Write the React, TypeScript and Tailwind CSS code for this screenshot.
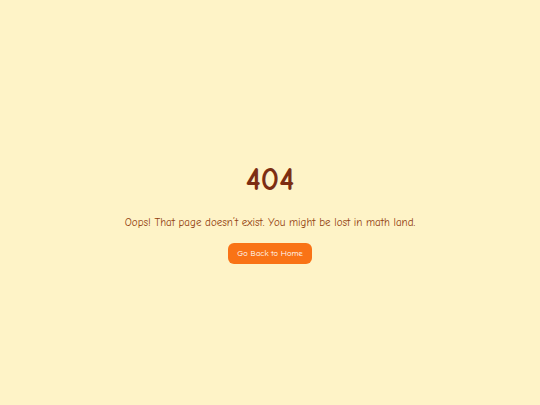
export default function App() {
  return (
    <div
      className="min-h-screen bg-[#fef3c7] flex flex-col items-center justify-center text-center px-4 pt-[22px]"
      style={{ fontFamily: '"Comic Sans MS", "Comic Neue", "Open Sans", sans-serif' }}
    >
      <h1 className="text-[32px] leading-none font-bold text-[#7c2d12] mb-[19px]">404</h1>
      <p className="text-[11px] leading-4 text-[#92400e] mb-3">
        Oops! That page doesn’t exist. You might be lost in math land.
      </p>
      <button className="bg-[#f97316] text-white text-[8.5px] px-[9px] h-[21px] rounded-md">
        Go Back to Home
      </button>
    </div>
  );
}
